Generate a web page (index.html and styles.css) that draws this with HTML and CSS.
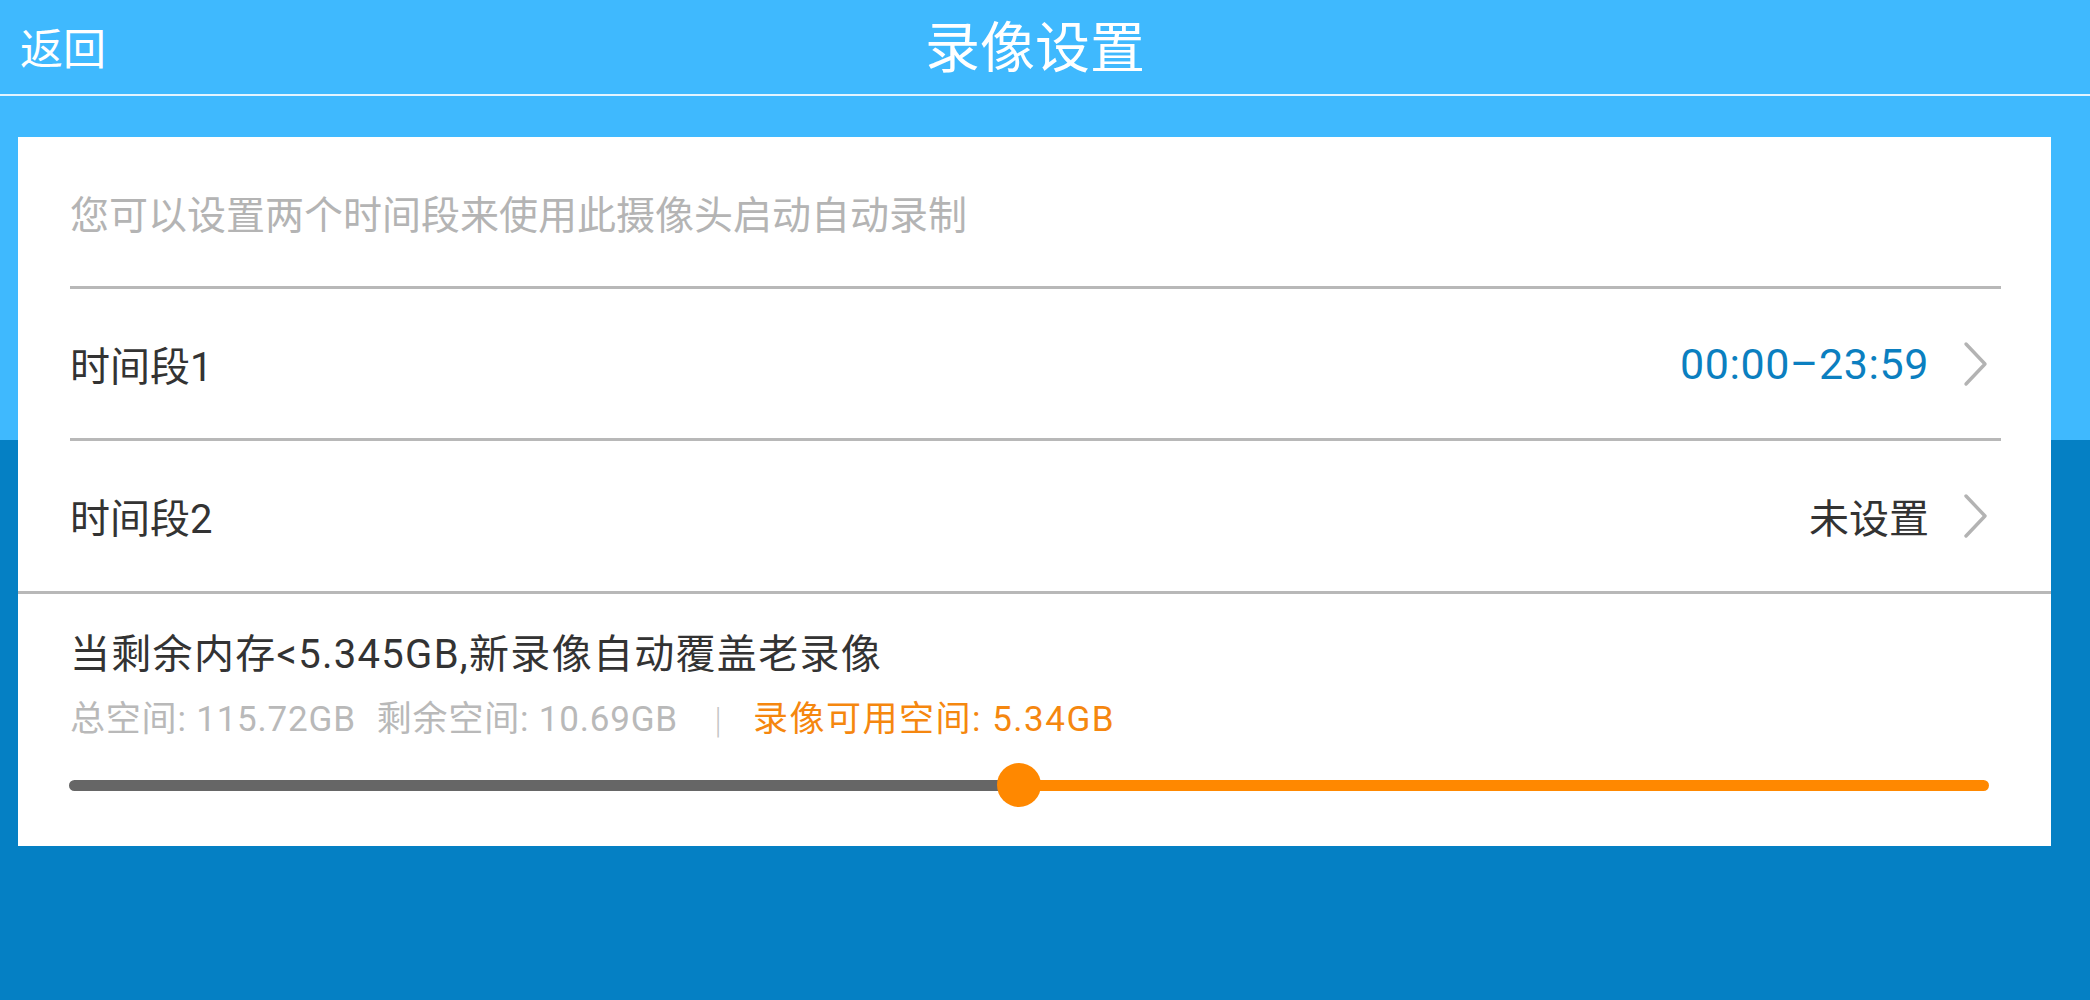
FILE: index.html
```html
<!DOCTYPE html>
<html lang="zh-CN">
<head>
<meta charset="utf-8">
<title>录像设置</title>
<link rel="stylesheet" href="styles.css">
</head>
<body>
<div class="page">
  <header class="topbar">
    <div class="back">返回</div>
    <div class="title">录像设置</div>
    <div class="spacer"></div>
  </header>

  <main class="card">
    <div class="hint">您可以设置两个时间段来使用此摄像头启动自动录制</div>

    <div class="row">
      <span class="label">时间段1</span>
      <span class="value">
        <span class="time">00:00–23:59</span>
        <svg class="chev" viewBox="0 0 26 46" width="26" height="46"><polyline points="3,3 22,23 3,43" fill="none" stroke="#b3b3b3" stroke-width="3.4" stroke-linecap="round" stroke-linejoin="round"/></svg>
      </span>
    </div>

    <div class="row last">
      <span class="label">时间段2</span>
      <span class="value">
        <span class="unset">未设置</span>
        <svg class="chev" viewBox="0 0 26 46" width="26" height="46"><polyline points="3,3 22,23 3,43" fill="none" stroke="#b3b3b3" stroke-width="3.4" stroke-linecap="round" stroke-linejoin="round"/></svg>
      </span>
    </div>

    <section class="storage">
      <div class="storage-title">当剩余内存&lt;5.345GB,新录像自动覆盖老录像</div>
      <div class="stats">
        <span class="stat">总空间: 115.72GB</span>
        <span class="stat">剩余空间: 10.69GB</span>
        <span class="sep">|</span>
        <span class="stat avail">录像可用空间: 5.34GB</span>
      </div>
      <div class="slider">
        <div class="track">
          <div class="track-used" style="width: 49.5%"></div>
          <div class="track-free"></div>
        </div>
        <div class="thumb" style="left: 49.5%"></div>
      </div>
    </section>
  </main>
</div>
</body>
</html>
```

FILE: styles.css
```css
html, body {
  margin: 0;
  padding: 0;
}

body {
  width: 2090px;
  height: 1000px;
  overflow: hidden;
  font-family: Roboto, "Noto Sans CJK SC", sans-serif;
  background: linear-gradient(to bottom, #3fb9fe 0, #3fb9fe 440px, #0580c4 440px, #0580c4 100%);
}

.page {
  display: flex;
  flex-direction: column;
}

.topbar {
  height: 94px;
  border-bottom: 2px solid #e3f4ff;
  display: grid;
  grid-template-columns: 1fr auto 1fr;
  align-items: center;
  padding: 0 40px 0 20px;
  color: #ffffff;
}

.back {
  font-size: 43px;
  line-height: 50px;
  font-family: "Noto Sans CJK SC", sans-serif;
  padding-bottom: 2px;
}

.title {
  font-size: 55px;
  line-height: 60px;
  font-family: "Noto Sans CJK SC", sans-serif;
  padding-bottom: 8px;
}

.card {
  margin: 41px 39px 0 18px;
  background: #ffffff;
  display: flex;
  flex-direction: column;
}

.hint {
  margin: 0 50px 0 52px;
  height: 149px;
  border-bottom: 3px solid #b8b8b8;
  display: flex;
  align-items: center;
  font-size: 39px;
  color: #b4b4b4;
  font-family: "Noto Sans CJK SC", sans-serif;
}

.row {
  margin: 0 50px 0 52px;
  height: 149px;
  border-bottom: 3px solid #b8b8b8;
  display: flex;
  align-items: center;
  justify-content: space-between;
  font-size: 40px;
  color: #333333;
}

.row.last {
  height: 150px;
  border-bottom: none;
}

.value {
  display: flex;
  align-items: center;
  gap: 34px;
}

.time {
  color: #0b7fc0;
  font-size: 43px;
  letter-spacing: 0.6px;
}

.chev {
  display: block;
  margin-right: 12px;
}

.storage {
  border-top: 3px solid #b8b8b8;
  padding: 36px 62px 39px 51px;
  display: flex;
  flex-direction: column;
}

.storage-title {
  font-size: 40px;
  line-height: 50px;
  color: #333333;
  padding-left: 1px;
  letter-spacing: 1.3px;
}

.stats {
  margin-top: 20px;
  line-height: 40px;
  font-size: 35px;
  letter-spacing: 0.8px;
  color: #b9b9b9;
  display: flex;
  align-items: center;
  padding-left: 1px;
}

.stat {
  margin-right: 21px;
}

.sep {
  font-family: "DejaVu Sans", sans-serif;
  font-weight: 300;
  font-size: 30px;
  line-height: 40px;
  color: #c4c4c4;
  letter-spacing: 0;
  margin: 0 30px 0 14px;
}

.stat.avail {
  color: #f5870f;
  margin-right: 0;
  letter-spacing: 1.5px;
}

.slider {
  position: relative;
  margin-top: 23px;
  height: 44px;
  display: flex;
  align-items: center;
}

.track {
  width: 100%;
  height: 11px;
  display: flex;
  border-radius: 6px;
  overflow: hidden;
}

.track-used {
  background: #666666;
  height: 100%;
}

.track-free {
  flex: 1;
  background: #ff8800;
  height: 100%;
}

.thumb {
  position: absolute;
  top: 0;
  width: 44px;
  height: 44px;
  margin-left: -22px;
  border-radius: 50%;
  background: #ff8800;
}
```
